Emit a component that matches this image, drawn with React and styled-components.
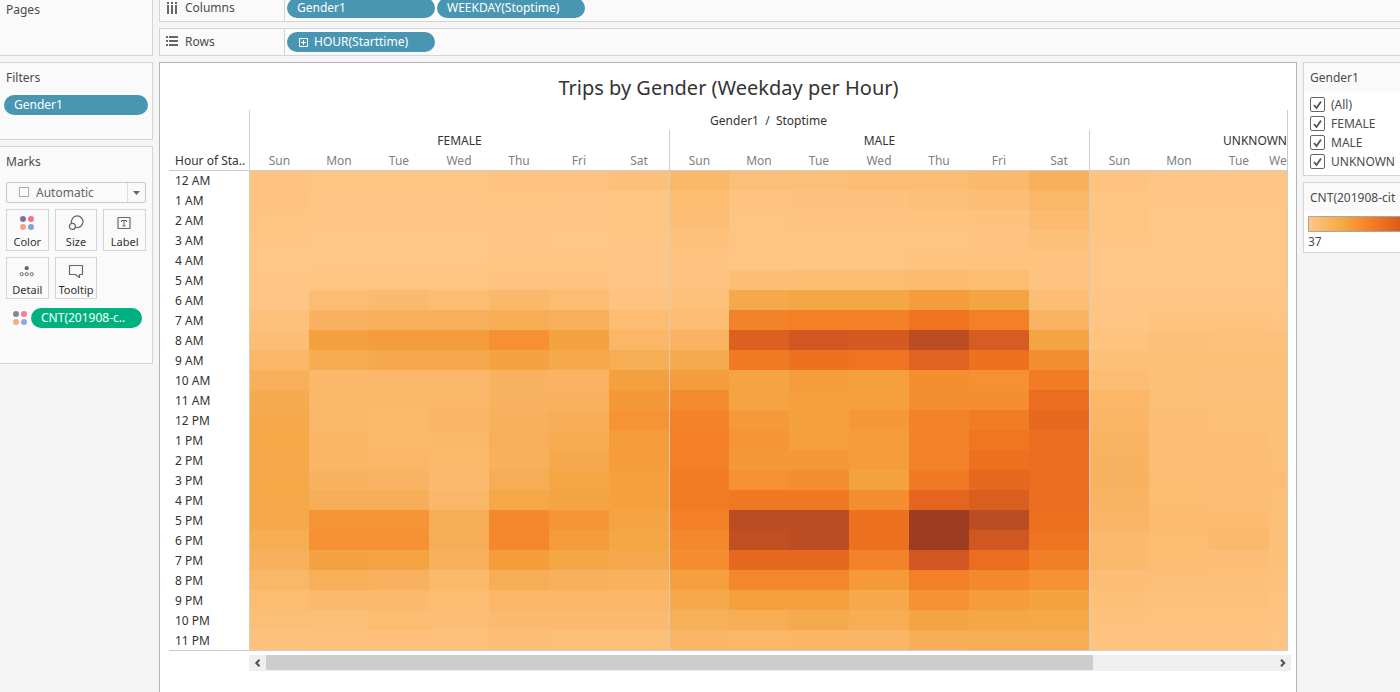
import React from "react";
import styled, { createGlobalStyle } from "styled-components";

const GlobalStyle = createGlobalStyle`
  *, *::before, *::after { box-sizing: border-box; }
  body {
    margin: 0;
    background: #f5f5f5;
    color: #4b4b4b;
    font-family: "Noto Sans", "Open Sans", sans-serif;
    font-size: 12px;
    line-height: 20px;
  }
  button, select, input { font: inherit; color: inherit; margin: 0; }
`;

/* ---------- colour scale ---------- */

const RAMP = [
  [0, 255, 198, 133],
  [10, 252, 191, 119],
  [20, 251, 183, 105],
  [30, 248, 175, 90],
  [40, 245, 167, 70],
  [48, 245, 156, 59],
  [55, 246, 146, 52],
  [62, 243, 129, 40],
  [72, 238, 113, 32],
  [80, 230, 103, 31],
  [87, 213, 90, 33],
  [92, 188, 76, 34],
  [100, 158, 60, 34],
];

function colorFor(level) {
  let i = 1;
  while (i < RAMP.length - 1 && RAMP[i][0] < level) i += 1;
  const [a, ...from] = RAMP[i - 1];
  const [b, ...to] = RAMP[i];
  const t = (level - a) / (b - a);
  return `rgb(${from.map((c, k) => Math.round(c + (to[k] - c) * t)).join(",")})`;
}

/* ---------- data ---------- */

const DAYS = ["Sun", "Mon", "Tue", "Wed", "Thu", "Fri", "Sat"];
const COLUMNS = [...DAYS, ...DAYS, ...DAYS.slice(0, 4)];
const isGroupStart = (i) => i % 7 === 0;

const TRIPS = [
  ["12 AM", [5, 2, 2, 2, 4, 4, 8, 19, 10, 10, 14, 14, 18, 29, 4, 1, 1, 1]],
  ["1 AM", [4, 1, 1, 1, 2, 1, 3, 14, 4, 6, 6, 8, 11, 20, 3, 1, 1, 1]],
  ["2 AM", [2, 1, 1, 1, 1, 1, 2, 11, 3, 4, 4, 5, 6, 15, 2, 0, 0, 0]],
  ["3 AM", [1, 0, 0, 0, 1, 0, 1, 7, 2, 2, 2, 3, 4, 9, 1, 0, 0, 0]],
  ["4 AM", [0, 0, 0, 0, 1, 1, 1, 4, 2, 2, 3, 4, 4, 5, 0, 0, 0, 0]],
  ["5 AM", [1, 3, 3, 3, 5, 4, 1, 4, 12, 14, 14, 15, 14, 4, 0, 0, 0, 0]],
  ["6 AM", [1, 14, 16, 14, 19, 14, 4, 7, 38, 41, 40, 48, 42, 12, 1, 1, 1, 1]],
  ["7 AM", [7, 26, 30, 29, 33, 30, 13, 12, 61, 63, 62, 71, 63, 25, 1, 4, 4, 3]],
  ["8 AM", [12, 45, 47, 47, 56, 44, 21, 25, 84, 88, 87, 92, 86, 42, 5, 8, 7, 7]],
  ["9 AM", [21, 34, 37, 37, 43, 38, 33, 36, 66, 72, 71, 82, 72, 57, 9, 9, 9, 10]],
  ["10 AM", [30, 19, 20, 20, 26, 25, 45, 47, 42, 47, 46, 57, 56, 65, 14, 9, 8, 8]],
  ["11 AM", [35, 19, 20, 20, 26, 27, 51, 58, 42, 45, 46, 57, 57, 75, 21, 10, 10, 9]],
  ["12 PM", [38, 20, 18, 22, 29, 31, 54, 61, 50, 45, 51, 61, 65, 79, 23, 11, 10, 9]],
  ["1 PM", [39, 23, 18, 19, 30, 34, 48, 63, 53, 46, 48, 61, 69, 75, 25, 11, 11, 9]],
  ["2 PM", [38, 23, 21, 18, 29, 37, 47, 63, 51, 51, 48, 61, 72, 75, 26, 11, 12, 10]],
  ["3 PM", [39, 26, 25, 16, 32, 40, 46, 65, 56, 57, 44, 66, 79, 75, 26, 13, 12, 11]],
  ["4 PM", [39, 31, 31, 20, 39, 42, 45, 65, 68, 68, 57, 81, 85, 75, 25, 14, 12, 10]],
  ["5 PM", [38, 53, 53, 33, 59, 53, 42, 63, 92, 92, 72, 100, 92, 73, 22, 15, 15, 10]],
  ["6 PM", [33, 55, 55, 32, 60, 49, 41, 59, 91, 92, 72, 100, 88, 70, 17, 14, 17, 9]],
  ["7 PM", [29, 43, 42, 29, 48, 41, 37, 57, 79, 79, 61, 88, 75, 64, 17, 14, 11, 9]],
  ["8 PM", [20, 30, 28, 18, 32, 29, 28, 46, 60, 60, 50, 63, 59, 55, 11, 10, 9, 7]],
  ["9 PM", [13, 17, 17, 14, 21, 21, 21, 38, 45, 46, 38, 55, 48, 44, 9, 7, 7, 5]],
  ["10 PM", [10, 10, 13, 11, 16, 16, 16, 30, 33, 36, 33, 42, 41, 39, 6, 5, 5, 4]],
  ["11 PM", [6, 7, 7, 7, 11, 10, 10, 23, 21, 23, 22, 31, 33, 33, 5, 4, 4, 2]],
];

/* ---------- page frame ---------- */

const Page = styled.div`
  display: flex;
  gap: 6px;
  height: 100vh;
  overflow: hidden;
`;

const Sidebar = styled.aside`
  flex: 0 0 153px;
  display: flex;
  flex-direction: column;
  gap: 6px;
`;

const Main = styled.main`
  flex: 1;
  min-width: 0;
  display: flex;
  flex-direction: column;
  gap: 6px;
  margin-top: -6px;
`;

const Workspace = styled.div`
  flex: 1;
  min-height: 0;
  display: flex;
  gap: 6px;
`;

/* ---------- sidebar ---------- */

const Card = styled.section`
  min-height: ${(p) => p.$height}px;
  padding: ${(p) => (p.$first ? 0 : 5)}px 4px 0 0;
  background: #fafafa;
  border: 1px solid #d4d4d4;
  border-left: 0;
  ${(p) => p.$first && "border-top: 0;"}
`;

const CardTitle = styled.h2`
  margin: 0;
  padding-left: 6px;
  font-size: 12px;
  font-weight: 400;
  line-height: 20px;
`;

const Pill = styled.button`
  display: flex;
  align-items: center;
  gap: 6px;
  width: ${(p) => p.$width || "148px"};
  height: 20px;
  padding: 0 ${(p) => (p.$icon ? 12 : 10)}px;
  border: 0;
  border-radius: 10px;
  background: ${(p) => (p.$green ? "#00b180" : "#4996b2")};
  color: #fff;
  line-height: 20px;
  white-space: nowrap;
`;

const FilterSlot = styled.div`
  padding: 7px 0 0 4px;
`;

const MarksBody = styled.div`
  padding: 10px 2px 0 6px;
`;

const SelectBox = styled.div`
  position: relative;
  height: 21px;
`;

const MarkSelect = styled.select`
  width: 100%;
  height: 21px;
  padding: 0 20px 0 29px;
  border: 1px solid #c8c8c8;
  border-radius: 2px;
  background: #fafafa;
  color: #666;
  line-height: 19px;
  appearance: none;
`;

const SelectArt = styled.svg`
  position: absolute;
  top: 0;
  ${(p) => (p.$end ? "right: 0;" : "left: 12px;")}
  pointer-events: none;
`;

const MarkGrid = styled.div`
  display: grid;
  grid-template-columns: repeat(3, 1fr);
  gap: 6px;
  margin-top: 6px;
`;

const MarkButton = styled.button`
  display: flex;
  flex-direction: column;
  align-items: center;
  gap: 1px;
  height: 42px;
  padding: 3px 0 0;
  border: 1px solid #d4d4d4;
  background: #fafafa;
  color: #333;
  font-size: 11px;
  line-height: 16px;
`;

const Encoding = styled.div`
  display: flex;
  align-items: center;
  gap: 3px;
  margin-top: 9px;
  padding-left: 6px;
`;

/* ---------- shelves ---------- */

const Shelf = styled.div`
  flex: 0 0 28px;
  display: flex;
  border: 1px solid #d4d4d4;
  border-right: 0;
  background: #fafafa;
`;

const ShelfLabel = styled.div`
  flex: 0 0 125px;
  display: flex;
  align-items: center;
  gap: 7px;
  padding-left: 6px;
  border-right: 1px solid #d4d4d4;
`;

const ShelfPills = styled.div`
  display: flex;
  align-items: center;
  gap: 2px;
  padding-left: 2px;
`;

/* ---------- chart ---------- */

const Viz = styled.section`
  flex: 1;
  min-width: 0;
  padding: 12px 8px 0 9px;
  border: 1px solid #b4b4b4;
  border-bottom: 0;
  background: #fff;
`;

const VizTitle = styled.h1`
  margin: 0 0 9px;
  font-size: 20px;
  font-weight: 400;
  line-height: 26px;
  text-align: center;
  color: #333;
`;

const Heatmap = styled.div`
  border-right: 1px solid #ccc;
  border-bottom: 1px solid #ccc;
  overflow: hidden;
`;

const Grid = styled.table`
  width: 100%;
  table-layout: fixed;
  border-collapse: separate;
  border-spacing: 0;
  color: #333;
`;

const LabelCol = styled.col`
  width: 80px;
`;

const DayCol = styled.col`
  width: ${(p) => (p.$fill ? "auto" : "60px")};
`;

const HeadCell = styled.th`
  height: 20px;
  padding: 2px 0 0;
  border-left: ${(p) => (p.$line ? "1px solid #ccc" : "0")};
  overflow: hidden;
  color: ${(p) => (p.$muted ? "#808080" : "#333")};
  font-weight: 400;
  line-height: 18px;
  text-align: ${(p) => p.$align || "center"};
  white-space: nowrap;
`;

const RowLabel = styled.th`
  height: 20px;
  padding: 0 0 0 6px;
  font-weight: 400;
  line-height: 19px;
  text-align: left;
  white-space: nowrap;
`;

const HeatCell = styled.td`
  height: 20px;
  padding: 0;
  border-left: ${(p) => (p.$line ? "1px solid #d8ccc0" : "0")};
`;

const BodyRows = styled.tbody`
  tr:first-child > * { border-top: 1px solid #ccc; }
`;

const ScrollBar = styled.div`
  display: flex;
  height: 16px;
  margin: 4px -3px 0 80px;
  background: #efefef;
`;

const ScrollButton = styled.button`
  flex: 0 0 17px;
  display: flex;
  align-items: center;
  justify-content: center;
  padding: 0;
  border: 0;
  background: none;
`;

const ScrollTrack = styled.div`
  flex: 1;
`;

const ScrollThumb = styled.div`
  width: 82%;
  height: 15px;
  background: #cdcdcd;
`;

/* ---------- legends ---------- */

const Legends = styled.aside`
  flex: 0 0 97px;
  min-width: 0;
  display: flex;
  flex-direction: column;
  gap: 6px;
`;

const Legend = styled.section`
  border: 1px solid #d4d4d4;
  border-right: 0;
  background: #fff;
  overflow: hidden;
`;

const LegendTitle = styled.h2`
  margin: 0;
  padding: 5px 0 4px 6px;
  background: #fafafa;
  font-size: 12px;
  font-weight: 400;
  line-height: 20px;
  white-space: nowrap;
`;

const CheckList = styled.div`
  padding: 3px 0 4px 6px;
`;

const CheckLabel = styled.label`
  display: flex;
  align-items: center;
  gap: 6px;
  height: 19px;
  white-space: nowrap;
`;

const CheckBox = styled.span`
  position: relative;
  flex: 0 0 15px;
  height: 15px;
  input {
    display: block;
    width: 15px;
    height: 15px;
    border: 1px solid #666;
    border-radius: 2px;
    background: #fff;
    appearance: none;
  }
  svg {
    position: absolute;
    inset: 0;
    visibility: hidden;
    pointer-events: none;
  }
  input:checked + svg { visibility: visible; }
`;

const RampBox = styled.div`
  padding: 4px 0 0 4px;
`;

const RampBar = styled.div`
  height: 16px;
  border: 1px solid #a8a8a0;
  border-right: 0;
  background: linear-gradient(to right, #ffc685, #f5a645 38%, #f38128 67%, #ee711f 80%, #dc5c1f);
`;

/* ---------- icons ---------- */

const Dots = ({ faded }) => (
  <svg width="16" height="16" viewBox="0 0 16 16" aria-hidden="true" opacity={faded ? 0.9 : 1}>
    <circle cx="4" cy="4" r="3" fill="#85709b" />
    <circle cx="12" cy="4" r="3" fill="#fb7082" />
    <circle cx="4" cy="12" r="3" fill="#f3a57b" />
    <circle cx="12" cy="12" r="3" fill="#80a4d0" />
  </svg>
);

const line = { fill: "none", stroke: "#666", strokeWidth: 1.2 };

const SizeIcon = () => (
  <svg width="18" height="18" viewBox="0 0 18 18" aria-hidden="true">
    <path d="M4.600 9.200A5.800 5.800 0 1 1 8.500 13.300" {...line} />
    <circle cx="5.400" cy="12.400" r="3" {...line} />
  </svg>
);

const LabelIcon = () => (
  <svg width="18" height="18" viewBox="0 0 18 18" aria-hidden="true">
    <rect x="2" y="3.500" width="12" height="11" rx="0.500" {...line} />
    <path d="M5.500 8V6.500h5V8M8 6.500v5.500M6.500 12h3" {...line} strokeWidth="1" />
  </svg>
);

const DetailIcon = () => (
  <svg width="18" height="18" viewBox="0 0 18 18" aria-hidden="true">
    <circle cx="8.700" cy="6.200" r="2.100" fill="#666" />
    <circle cx="3.700" cy="12.200" r="1.600" {...line} strokeWidth="1" />
    <circle cx="8.700" cy="12.200" r="1.600" {...line} strokeWidth="1" />
    <circle cx="13.700" cy="12.200" r="1.600" {...line} strokeWidth="1" />
  </svg>
);

const TooltipIcon = () => (
  <svg width="18" height="18" viewBox="0 0 18 18" aria-hidden="true">
    <path d="M2.500 3.500h13v9h-3v3l-4-3h-6z" {...line} strokeLinejoin="round" />
  </svg>
);

const ColumnsIcon = () => (
  <svg width="12" height="12" viewBox="0 0 12 12" aria-hidden="true" fill="#666">
    <path d="M1 0h2v2H1zM5 0h2v2H5zM9 0h2v2H9zM1 3h2v9H1zM5 3h2v9H5zM9 3h2v9H9z" />
  </svg>
);

const RowsIcon = () => (
  <svg width="12" height="12" viewBox="0 0 12 12" aria-hidden="true" fill="#666">
    <path d="M0 0h2v2H0zM0 4h2v2H0zM0 8h2v2H0zM3 0h9v2H3zM3 4h9v2H3zM3 8h9v2H3z" />
  </svg>
);

const PlusIcon = () => (
  <svg width="9" height="9" viewBox="0 0 9 9" aria-hidden="true" overflow="visible">
    <path d="M0.500 0.500h8v8h-8zM4.500 2v5M2 4.500h5" fill="none" stroke="#fff" />
  </svg>
);

const Chevron = ({ flip }) => (
  <svg width="8" height="8" viewBox="0 0 8 8" aria-hidden="true">
    <path d={flip ? "M2 0.800L5.200 4L2 7.200" : "M5.500 0.800L2.300 4L5.500 7.200"} fill="none" stroke="#505050" strokeWidth="2" />
  </svg>
);

const MARKS = [
  ["Color", Dots],
  ["Size", SizeIcon],
  ["Label", LabelIcon],
  ["Detail", DetailIcon],
  ["Tooltip", TooltipIcon],
];

const IconSlot = styled.span`
  display: flex;
  align-items: center;
  justify-content: center;
  height: 20px;
`;

/* ---------- parts ---------- */

function MarksCard() {
  return (
    <Card $height={218}>
      <CardTitle>Marks</CardTitle>
      <MarksBody>
        <SelectBox>
          <MarkSelect aria-label="Mark type" defaultValue="auto">
            <option value="auto">Automatic</option>
          </MarkSelect>
          <SelectArt width="12" height="21" aria-hidden="true">
            <rect x="1.500" y="5.500" width="9" height="9" fill="none" stroke="#aaa" />
          </SelectArt>
          <SelectArt $end width="20" height="21" aria-hidden="true">
            <path d="M1.500 1v19" stroke="#ddd" />
            <path d="M7 9h7l-3.500 4z" fill="#666" />
          </SelectArt>
        </SelectBox>
        <MarkGrid>
          {MARKS.map(([name, Icon]) => (
            <MarkButton key={name} type="button">
              <IconSlot><Icon /></IconSlot>
              {name}
            </MarkButton>
          ))}
        </MarkGrid>
        <Encoding>
          <Dots faded />
          <Pill type="button" $green $width="111px">CNT(201908-c..</Pill>
        </Encoding>
      </MarksBody>
    </Card>
  );
}

function HeatTable() {
  return (
    <Heatmap>
      <Grid>
        <colgroup>
          <LabelCol />
          {COLUMNS.map((_, i) => (
            <DayCol key={i} $fill={i === COLUMNS.length - 1} />
          ))}
        </colgroup>
        <thead>
          <tr>
            <HeadCell as="td" />
            <HeadCell colSpan={18} $line>Gender1 &nbsp;/ &nbsp;Stoptime</HeadCell>
          </tr>
          <tr>
            <HeadCell as="td" />
            <HeadCell colSpan={7} $line>FEMALE</HeadCell>
            <HeadCell colSpan={7} $line>MALE</HeadCell>
            <HeadCell colSpan={4} $line $align="right">UNKNOWN</HeadCell>
          </tr>
          <tr>
            <RowLabel scope="col">Hour of Sta..</RowLabel>
            {COLUMNS.map((day, i) => (
              <HeadCell
                key={i}
                scope="col"
                $muted
                $line={isGroupStart(i)}
                $align={i === COLUMNS.length - 1 ? "left" : "center"}
              >
                {day}
              </HeadCell>
            ))}
          </tr>
        </thead>
        <BodyRows>
          {TRIPS.map(([hour, levels]) => (
            <tr key={hour}>
              <RowLabel scope="row">{hour}</RowLabel>
              {levels.map((level, i) => (
                <HeatCell key={i} $line={isGroupStart(i)} style={{ backgroundColor: colorFor(level) }} />
              ))}
            </tr>
          ))}
        </BodyRows>
      </Grid>
    </Heatmap>
  );
}

export default function App() {
  return (
    <>
      <GlobalStyle />
      <Page>
        <Sidebar>
          <Card $height={56} $first>
            <CardTitle>Pages</CardTitle>
          </Card>
          <Card $height={78}>
            <CardTitle>Filters</CardTitle>
            <FilterSlot>
              <Pill type="button" $width="100%">Gender1</Pill>
            </FilterSlot>
          </Card>
          <MarksCard />
        </Sidebar>
        <Main>
          <Shelf>
            <ShelfLabel><ColumnsIcon />Columns</ShelfLabel>
            <ShelfPills>
              <Pill type="button">Gender1</Pill>
              <Pill type="button">WEEKDAY(Stoptime)</Pill>
            </ShelfPills>
          </Shelf>
          <Shelf>
            <ShelfLabel><RowsIcon />Rows</ShelfLabel>
            <ShelfPills>
              <Pill type="button" $icon><PlusIcon />HOUR(Starttime)</Pill>
            </ShelfPills>
          </Shelf>
          <Workspace>
            <Viz>
              <VizTitle>Trips by Gender (Weekday per Hour)</VizTitle>
              <HeatTable />
              <ScrollBar>
                <ScrollButton type="button" aria-label="Scroll left"><Chevron /></ScrollButton>
                <ScrollTrack><ScrollThumb /></ScrollTrack>
                <ScrollButton type="button" aria-label="Scroll right"><Chevron flip /></ScrollButton>
              </ScrollBar>
            </Viz>
            <Legends>
              <Legend>
                <LegendTitle>Gender1</LegendTitle>
                <CheckList>
                  {["(All)", "FEMALE", "MALE", "UNKNOWN"].map((name) => (
                    <CheckLabel key={name}>
                      <CheckBox>
                        <input type="checkbox" defaultChecked />
                        <svg width="15" height="15" viewBox="0 0 15 15" aria-hidden="true">
                          <path d="M4 8l2.500 3L11 4.500" fill="none" stroke="#555" strokeWidth="1.800" />
                        </svg>
                      </CheckBox>
                      {name}
                    </CheckLabel>
                  ))}
                </CheckList>
              </Legend>
              <Legend>
                <LegendTitle>CNT(201908-cit</LegendTitle>
                <RampBox>
                  <RampBar />
                  37
                </RampBox>
              </Legend>
            </Legends>
          </Workspace>
        </Main>
      </Page>
    </>
  );
}
